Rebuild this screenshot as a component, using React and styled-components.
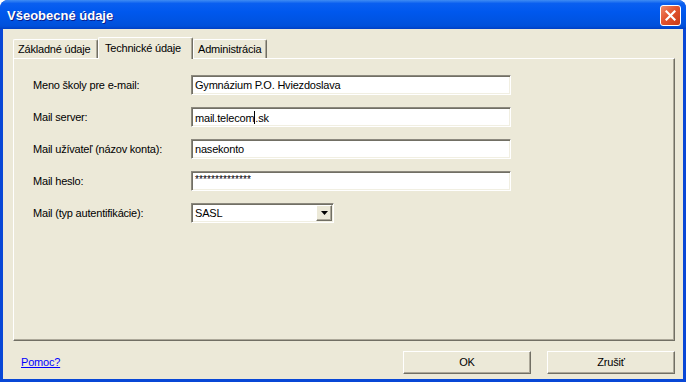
import React from 'react'
import styled, { createGlobalStyle } from 'styled-components'

const Global = createGlobalStyle`
  html, body { margin: 0; padding: 0; background: #ffffff; }
  body { font-family: "Liberation Sans", Arial, sans-serif; letter-spacing: -0.2px; }
`

const Window = styled.div`
  width: 686px;
  height: 382px;
  box-sizing: border-box;
  display: flex;
  flex-direction: column;
  background: #0847d6;
  border-radius: 8px 8px 0 0;
  overflow: hidden;
`

const TitleBar = styled.div`
  height: 29px;
  flex: none;
  display: flex;
  align-items: center;
  justify-content: space-between;
  padding: 0 5px 0 7px;
  background: linear-gradient(#3f8cf3 0%, #0a5ff0 12%, #0058ee 40%, #0054e3 70%, #0050da 90%, #003fc4 100%);
`

const Title = styled.div`
  color: #fff;
  font-weight: bold;
  font-size: 13px;
  letter-spacing: 0;
  text-shadow: 1px 1px 0 #0a1e8c;
  padding-top: 2px;
`

const CloseBtn = styled.div`
  width: 21px;
  height: 21px;
  box-sizing: border-box;
  border: 1px solid #fff;
  border-radius: 3px;
  background: linear-gradient(135deg, #f08a6a 0%, #e2542f 45%, #c93a16 100%);
  display: flex;
  align-items: center;
  justify-content: center;
  margin-top: 1px;
`

const Client = styled.div`
  flex: 1;
  margin: 0 3px 3px 3px;
  background: #ece9d8;
  display: flex;
  flex-direction: column;
  padding: 8px 8px 0 10px;
`

const TabRow = styled.div`
  display: flex;
  align-items: flex-end;
  height: 21px;
  position: relative;
  z-index: 1;
`

const Tab = styled.div`
  box-sizing: border-box;
  width: ${p => p.$w}px;
  height: ${p => (p.$active ? 22 : 19)}px;
  margin-bottom: ${p => (p.$active ? -1 : 0)}px;
  background: #ece9d8;
  border-top: 1px solid #fff;
  border-left: 1px solid #fff;
  border-right: 1px solid #716f64;
  box-shadow: inset -1px 0 0 #aca899;
  border-radius: 2px 2px 0 0;
  font-size: 11px;
  color: #000;
  padding: ${p => (p.$active ? '4px 0 0 6px' : '3px 0 0 4px')};
  white-space: nowrap;
`

const Panel = styled.div`
  height: 283px;
  box-sizing: border-box;
  border-top: 1px solid #fff;
  border-left: 1px solid #fff;
  border-right: 1px solid #716f64;
  border-bottom: 1px solid #716f64;
  box-shadow: inset -1px -1px 0 #aca899;
  padding: 16px 0 0 19px;
  display: flex;
  flex-direction: column;
  gap: 12px;
`

const Row = styled.div`
  display: flex;
  align-items: center;
  height: 20px;
`

const Label = styled.div`
  width: 158px;
  font-size: 11px;
  color: #000;
`

const Field = styled.div`
  position: relative;
  width: ${p => p.$w}px;
  height: 20px;
  box-sizing: border-box;
  background: #fff;
  border-top: 1px solid #8c897e;
  border-left: 1px solid #8c897e;
  border-right: 1px solid #fff;
  border-bottom: 1px solid #fff;
  box-shadow: inset 1px 1px 0 #716f64, inset -1px -1px 0 #f1efe2;
  font-size: 11px;
  color: #000;
  padding: 3px 0 0 3px;
  display: flex;
  align-items: flex-start;
`

const Stars = styled.span`
  font-size: 10px;
  letter-spacing: 0.1px;
  line-height: 9px;
`

const Caret = styled.span`
  display: inline-block;
  width: 1px;
  height: 13px;
  background: #000;
  vertical-align: -2px;
`

const DropBtn = styled.div`
  position: absolute;
  right: 1px;
  top: 1px;
  width: 16px;
  height: 16px;
  box-sizing: border-box;
  background: #ece9d8;
  border-top: 1px solid #fff;
  border-left: 1px solid #fff;
  border-right: 1px solid #716f64;
  border-bottom: 1px solid #716f64;
  box-shadow: inset -1px -1px 0 #aca899;
  display: flex;
  align-items: center;
  justify-content: center;
`

const Footer = styled.div`
  flex: 1;
  display: flex;
  align-items: center;
  padding: 0 0 0 8px;
  gap: 16px;
`

const Link = styled.a`
  color: #0000ff;
  text-decoration: underline;
  font-size: 11px;
  margin-right: auto;
  margin-top: 4px;
`

const Button = styled.div`
  width: 128px;
  height: 23px;
  box-sizing: border-box;
  background: #ece9d8;
  border-top: 1px solid #fff;
  border-left: 1px solid #fff;
  border-right: 1px solid #716f64;
  border-bottom: 1px solid #716f64;
  box-shadow: inset -1px -1px 0 #aca899;
  font-size: 11px;
  display: flex;
  align-items: center;
  justify-content: center;
  margin-top: 4px;
`

const fields = [
  { label: 'Meno školy pre e-mail:', value: 'Gymnázium P.O. Hviezdoslava' },
  { label: 'Mail server:', value: 'caret' },
  { label: 'Mail užívateľ (názov konta):', value: 'nasekonto' },
  { label: 'Mail heslo:', value: 'stars' },
]

export default function App() {
  return (
    <Window>
      <Global />
      <TitleBar>
        <Title>Všeobecné údaje</Title>
        <CloseBtn>
          <svg width="11" height="11" viewBox="0 0 11 11">
            <path d="M1.5 1.5 L9.5 9.5 M9.5 1.5 L1.5 9.5" stroke="#fff" strokeWidth="2.2" strokeLinecap="square" />
          </svg>
        </CloseBtn>
      </TitleBar>
      <Client>
        <TabRow>
          <Tab $w={85}>Základné údaje</Tab>
          <Tab $w={95} $active>Technické údaje</Tab>
          <Tab $w={74}>Administrácia</Tab>
        </TabRow>
        <Panel>
          {fields.map(f => (
            <Row key={f.label}>
              <Label>{f.label}</Label>
              <Field $w={320}>
                {f.value === 'caret' ? (
                  <span>mail.telecom<Caret />.sk</span>
                ) : f.value === 'stars' ? (
                  <Stars>**************</Stars>
                ) : (
                  f.value
                )}
              </Field>
            </Row>
          ))}
          <Row>
            <Label>Mail (typ autentifikácie):</Label>
            <Field $w={143}>
              SASL
              <DropBtn>
                <svg width="7" height="4" viewBox="0 0 7 4">
                  <path d="M0 0 H7 L3.5 4 Z" fill="#000" />
                </svg>
              </DropBtn>
            </Field>
          </Row>
        </Panel>
        <Footer>
          <Link>Pomoc?</Link>
          <Button>OK</Button>
          <Button>Zrušiť</Button>
        </Footer>
      </Client>
    </Window>
  )
}
